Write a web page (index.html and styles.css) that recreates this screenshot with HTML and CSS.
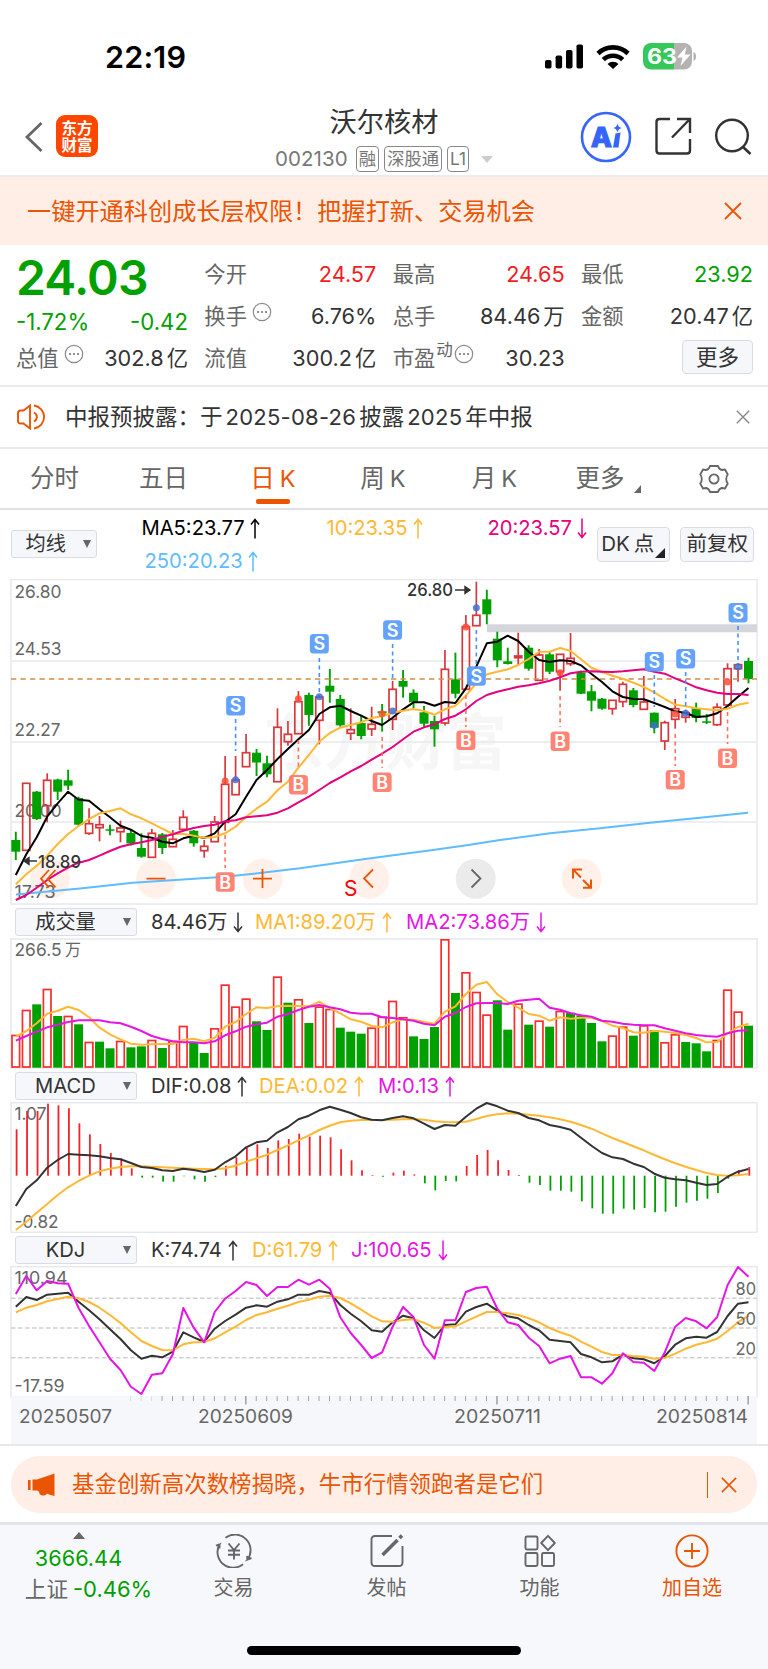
FILE: index.html
```html
<!DOCTYPE html>
<html lang="zh-CN">
<head>
<meta charset="utf-8">
<title>沃尔核材 002130</title>
<link rel="stylesheet" href="styles.css">
</head>
<body>
<svg class="defs" width="0" height="0">
  <symbol id="up" viewBox="0 0 10 21"><path d="M5 20.5V1.5M1 6.5l4-5 4 5" fill="none" stroke="currentColor" stroke-width="1.5"/></symbol>
  <symbol id="down" viewBox="0 0 10 21"><path d="M5 .5v19M1 14.5l4 5 4-5" fill="none" stroke="currentColor" stroke-width="1.5"/></symbol>
  <symbol id="dots" viewBox="0 0 20 20"><circle cx="10" cy="10" r="8.7" fill="none" stroke="#8a8a8a" stroke-width="1.2"/><g fill="#777"><circle cx="6" cy="10" r="1.1"/><circle cx="10" cy="10" r="1.1"/><circle cx="14" cy="10" r="1.1"/></g></symbol>
  <symbol id="cross" viewBox="0 0 18 18"><path d="M1 1l16 16M17 1L1 17" fill="none" stroke="currentColor" stroke-width="1.8"/></symbol>
</svg>

<header class="status">
  <span class="clock">22:19</span>
  <svg class="status-icons" width="154" height="30" viewBox="543 41 154 30">
    <g><rect x="545" y="60" width="6.5" height="8.5" rx="1.8"/><rect x="555.6" y="55.5" width="6.5" height="13" rx="1.8"/><rect x="566" y="50" width="6.5" height="18.5" rx="1.8"/><rect x="576.5" y="44.5" width="6.5" height="24" rx="1.8"/></g>
    <g fill="none" stroke="#000" stroke-width="4.6"><path d="M598 53.5a21.5 21.5 0 0 1 30 0"/><path d="M603.3 59.6a14 14 0 0 1 19.4 0"/></g>
    <path d="M607.5 64a8 8 0 0 1 11 0l-5.5 5z"/>
    <clipPath id="bat"><rect x="643" y="43" width="49" height="26.5" rx="8"/></clipPath>
    <g clip-path="url(#bat)"><rect x="643" y="43" width="31" height="27" fill="#34c759"/><rect x="674" y="43" width="19" height="27" fill="#b3b3b3"/></g>
    <path d="M693.5 52c3.5 1.5 3.5 7.5 0 9z" fill="#b3b3b3"/>
    <text x="647" y="64" class="bat-text" textLength="30" lengthAdjust="spacingAndGlyphs">63</text>
    <path d="M686.5 46.5L677 57.5h5.5l-2 8.5 10-11.5h-5.7z" fill="#fff"/>
  </svg>
</header>

<nav class="nav">
  <div class="nav-left">
    <svg width="20" height="32" viewBox="0 0 20 32"><path d="M17.5 2L3 16l14.5 14" fill="none" stroke="#666" stroke-width="2.8"/></svg>
    <div class="logo"><span>东方</span><span>财富</span></div>
  </div>
  <div class="nav-title">
    <h1>沃尔核材</h1>
    <div class="code"><span class="num">002130</span><i>融</i><i>深股通</i><i>L1</i><b></b></div>
  </div>
  <div class="nav-right">
    <svg width="52" height="52" viewBox="579 111 52 52"><circle cx="605" cy="137" r="24" fill="none" stroke="#3565fb" stroke-width="2.6"/><text x="590" y="147" class="ai">A</text><path d="M614.5 133.5l5-1-2 15h-5.5z" fill="#3565fb"/><path d="M616.5 123.5q.8 4 4.3 4.5-3.5.6-4.3 4.5-.8-3.9-4.2-4.5 3.400-.6 4.2-4.5z" fill="#3565fb"/></svg>
    <svg width="38" height="38" viewBox="653 117 38 38"><path d="M669 120h-10.500q-3 0-3 3v28.500q0 3 3 3H686q3 0 3-3V140M676 120h13v14M688.500 120.500L671 138.500" transform="translate(0 -1)" fill="none" stroke="#333" stroke-width="2.4"/></svg>
    <svg width="38" height="38" viewBox="713 117 38 38"><circle cx="731" cy="135.500" r="15.800" fill="none" stroke="#333" stroke-width="2.4"/><path d="M742 147l7.500 7" stroke="#333" stroke-width="2.6"/></svg>
  </div>
</nav>

<div class="banner"><span>一键开通科创成长层权限！把握打新、交易机会</span><svg width="18" height="18"><use href="#cross"/></svg></div>

<section class="quote">
  <div class="col">
    <strong class="price">24.03</strong>
    <div class="change"><span>-1.72%</span><span>-0.42</span></div>
    <div class="cell"><label>总值</label><svg class="tip" width="20" height="20"><use href="#dots"/></svg><span class="val">302.8<em>亿</em></span></div>
  </div>
  <div class="col">
    <div class="cell"><label>今开</label><span class="val up">24.57</span></div>
    <div class="cell"><label>换手</label><svg class="tip" width="20" height="20"><use href="#dots"/></svg><span class="val">6.76%</span></div>
    <div class="cell"><label>流值</label><span class="val">300.2<em>亿</em></span></div>
  </div>
  <div class="col">
    <div class="cell"><label>最高</label><span class="val up">24.65</span></div>
    <div class="cell"><label>总手</label><span class="val">84.46<em>万</em></span></div>
    <div class="cell"><label>市盈</label><small>动</small><svg class="tip near" width="20" height="20"><use href="#dots"/></svg><span class="val">30.23</span></div>
  </div>
  <div class="col">
    <div class="cell"><label>最低</label><span class="val down">23.92</span></div>
    <div class="cell"><label>金额</label><span class="val">20.47<em>亿</em></span></div>
    <div class="cell"><button class="more">更多</button></div>
  </div>
</section>

<div class="notice">
  <svg width="30" height="26" viewBox="0 0 30 26" fill="none" stroke="#ea5504" stroke-width="1.9"><path d="M13 1.500L6.500 6.500H3.500Q1 6.500 1 9v8q0 2.500 2.500 2.500h3L13 24.500z"/><path d="M17 8.500a5 5 0 0 1 0 9M17 1.500a11.600 11.600 0 0 1 0 23"/></svg>
  <span class="notice-text">中报预披露：于<u>2025-08-26</u>披露<u>2025</u>年中报</span>
  <svg class="notice-x" width="14" height="14"><use href="#cross"/></svg>
</div>

<div class="tabs">
  <a>分时</a><a>五日</a><a class="on">日<u>K</u></a><a>周<u>K</u></a><a>月<u>K</u></a><a class="drop">更多<b></b></a>
  <svg width="30" height="30" viewBox="-15 -15 30 30" fill="none" stroke="#666" stroke-width="1.8"><path d="M-4-13h8q1 3.500 4 4l3-.5 2.800 5q-1.600 2-1.600 4.500t1.600 4.500l-2.800 5-3-.5q-3 .5-4 4h-8q-1-3.500-4-4l-3 .5-2.800-5q1.600-2 1.600-4.500t-1.600-4.500l2.800-5 3 .5q3-.5 4-4z" stroke-linejoin="round"/><circle r="4.600"/></svg>
</div>

<div class="indicator">
  <div class="select small"><span>均线</span><b></b></div>
  <div class="ma">
    <span class="black">MA5:23.77<svg width="10" height="21"><use href="#up"/></svg></span>
    <span class="gold">10:23.35<svg width="10" height="21"><use href="#up"/></svg></span>
    <span class="pink">20:23.57<svg width="10" height="21"><use href="#down"/></svg></span>
    <span class="sky">250:20.23<svg width="10" height="21"><use href="#up"/></svg></span>
  </div>
  <div class="chip dk">DK<em>点</em><b></b></div>
  <div class="chip">前复权</div>
</div>

<svg class="chart" id="price" width="768" height="326" viewBox="0 579 768 326"></svg>

<div class="sub">
  <div class="select"><span>成交量</span><b></b></div>
  <span class="dark w1">84.46万<svg width="10" height="21"><use href="#down"/></svg></span>
  <span class="gold w2">MA1:89.20万<svg width="10" height="21"><use href="#up"/></svg></span>
  <span class="violet">MA2:73.86万<svg width="10" height="21"><use href="#down"/></svg></span>
</div>
<svg class="chart" id="volume" width="768" height="131" viewBox="0 938 768 131"></svg>

<div class="sub">
  <div class="select"><span>MACD</span><b></b></div>
  <span class="dark w3">DIF:0.08<svg width="10" height="21"><use href="#up"/></svg></span>
  <span class="gold w4">DEA:0.02<svg width="10" height="21"><use href="#up"/></svg></span>
  <span class="violet">M:0.13<svg width="10" height="21"><use href="#up"/></svg></span>
</div>
<svg class="chart" id="macd" width="768" height="131" viewBox="0 1102 768 131"></svg>

<div class="sub">
  <div class="select"><span>KDJ</span><b></b></div>
  <span class="dark w5">K:74.74<svg width="10" height="21"><use href="#up"/></svg></span>
  <span class="gold w6">D:61.79<svg width="10" height="21"><use href="#up"/></svg></span>
  <span class="violet">J:100.65<svg width="10" height="21"><use href="#down"/></svg></span>
</div>
<svg class="chart" id="kdj" width="768" height="178" viewBox="0 1266 768 178"></svg>

<div class="promo-wrap">
  <div class="promo">
    <svg width="28" height="24" viewBox="0 0 28 24" fill="#ea5504"><rect x="0" y="7" width="2.600" height="10"/><path d="M4.500 6.500H9L26.500.500V23L21 21.500 19 20.500q-1 2.500-4.500 2t-3.500-4L9 17.500H4.500z"/></svg>
    <span>基金创新高次数榜揭晓，牛市行情领跑者是它们</span>
    <hr>
    <svg width="16" height="16"><use href="#cross"/></svg>
  </div>
</div>

<footer class="tabbar">
  <div class="index"><b></b><span class="num">3666.44</span><span>上证<u>-0.46%</u></span></div>
  <div class="item"><svg width="38" height="34" viewBox="-19 -17 38 34" fill="none" stroke="#666" stroke-width="1.9"><path d="M-8.500-13.200A15.600 15.600 0 0 1 13.500 8.500l4-1.500M13.500 8.500L13 5M9 13.200A15.600 15.600 0 0 1-14.500-6.500l-3.500 1.200M-14.500-6.500v4"/><path d="M-5.500-7.500L0-1l5.500-6.500M-6-.500H6M-6 3.800H6M0-1V8.500"/></svg><span>交易</span></div>
  <div class="item"><svg width="34" height="34" viewBox="0 0 34 34" fill="none" stroke="#666" stroke-width="1.9"><path d="M22 2H5Q1.500 2 1.500 5.500v23Q1.500 32 5 32h24q3.500 0 3.500-3.500V12"/><path d="M12.500 21L27.500 6" stroke-width="3.6"/><path d="M29.500 4l2.500-2.500" stroke-width="3.6"/></svg><span>发帖</span></div>
  <div class="item"><svg width="34" height="34" viewBox="0 0 34 34" fill="none" stroke="#666" stroke-width="1.9"><rect x="2.500" y="2.500" width="12" height="13" rx="1.500"/><rect x="2.500" y="19" width="12" height="13" rx="1.500"/><rect x="19" y="19" width="12" height="13" rx="1.500"/><path d="M25 1.800l6.800 7.200L25 16.200 18.200 9z" stroke-linejoin="round"/></svg><span>功能</span></div>
  <div class="item add"><svg width="34" height="34" viewBox="0 0 34 34" fill="none" stroke="#ea5504" stroke-width="1.9"><circle cx="17" cy="17" r="15.600"/><path d="M17 9v16M9 17h16"/></svg><span>加自选</span></div>
  <div class="home"></div>
</footer>
<script src="chart.js"></script>
</body>
</html>
```

FILE: styles.css
```css
* { box-sizing: border-box; }
body { margin: 0; width: 768px; background: #fff; color: #333; font-family: Inter, "Noto Sans CJK SC", sans-serif; font-size: 21px; line-height: 1; }
u, i, em { text-decoration: none; font-style: normal; }
svg { display: block; flex: none; }
.defs { height: 0; }

.status { height: 100px; padding: 41px 71px 0 105px; display: flex; justify-content: space-between; align-items: flex-start; }
.clock { color: #000; font-size: 30.5px; font-weight: 600; line-height: 32px; letter-spacing: .2px; }
.bat-text { font: 700 21px Inter, sans-serif; fill: #fff; }

.nav { height: 77px; padding: 0 16px 0 24px; display: grid; grid-template-columns: 175px 1fr 183px; border-bottom: 2px solid #ececf0; }
.nav-left { display: flex; align-items: flex-start; padding-top: 15px; gap: 12px; }
.nav-left svg { margin-top: 6px; }
.logo { width: 42px; height: 42px; border-radius: 9px; background: #ff4600; color: #fff; display: flex; flex-direction: column; align-items: center; justify-content: center; font: 700 15.5px/17.5px "Noto Sans CJK SC", sans-serif; }
.nav-title { display: flex; flex-direction: column; align-items: center; }
.nav-title h1 { margin: 6px 0 0; font-size: 27.2px; line-height: 34px; font-weight: 400; color: #333; }
.code { display: flex; align-items: center; height: 28px; margin-top: 5px; gap: 5px; color: #777; }
.code .num { font-size: 20.5px; margin-right: 3px; letter-spacing: .1px; }
.code i { border: 1.5px solid #888; border-radius: 4px; height: 26px; line-height: 23px; padding: 0 2px; font-size: 17.3px; }
.code b { border: 6px solid transparent; border-top: 7px solid #ccc; border-bottom: 0; margin-left: 7px; }
.nav-right { display: flex; justify-content: flex-end; gap: 22px; padding-top: 11px; }
.nav-right svg + svg { margin-top: 6px; }
.ai { font: 800 27px Inter, sans-serif; fill: #3565fb; stroke: #3565fb; stroke-width: 1.2px; }

.banner { height: 68px; background: #feeee6; color: #ea5504; display: flex; justify-content: space-between; align-items: center; padding: 3px 26px 0 27px; font-size: 24.2px; }
.banner svg { margin-top: -4px; }

.quote { height: 142px; padding: 9px 15px 0 16px; display: grid; grid-template-columns: 172px 172px 172px 172px; justify-content: space-between; border-bottom: 2px solid #ebebef; }
.cell { height: 42px; display: flex; align-items: center; }
.cell label { color: #666; font-size: 21.3px; }
.cell small { color: #666; font-size: 16.5px; margin: -18px 0 0 1px; }
.tip { margin: -11px 0 0 5px; }
.tip.near { margin-left: 1px; }
.val { margin-left: auto; font-size: 21.7px; }
.val em { margin-left: 3px; font-size: 21.3px; }
.up { color: #f21c23; }
.down, .change, .price { color: #00a000; }
.price { display: block; height: 47px; font-size: 48px; line-height: 47px; font-weight: 600; letter-spacing: -.8px; }
.change { height: 37px; display: flex; justify-content: space-between; align-items: center; padding-top: 6px; font-size: 22.2px; }
.more { margin: -5px 0 0 auto; width: 71px; height: 34px; padding: 0; border: 1.5px solid #d9dce6; border-radius: 4px; background: #f6f7fb; font: inherit; font-size: 21.5px; line-height: 30px; color: #333; }

.notice { height: 62px; display: flex; align-items: center; padding: 0 18px 0 17px; border-bottom: 2px solid #e9e9ed; color: #333; }
.notice-text { margin-left: 18px; font-size: 22.5px; }
.notice-text u { margin: 0 3px; font-size: 22px; letter-spacing: .25px; }
.notice-x { margin-left: auto; color: #888; }

.tabs { height: 61px; display: grid; grid-template-columns: 109px 109px 110px 110px 113px 114px 1fr; align-items: center; justify-items: center; color: #666; font-size: 24.5px; border-bottom: 2px solid #e0e1e6; }
.tabs a { height: 59px; line-height: 59px; display: flex; align-items: center; position: relative; }
.tabs u { margin-left: 5px; font-size: 23.5px; }
.tabs .on { color: #ea5504; }
.tabs .on::after { content: ""; position: absolute; left: 50%; margin-left: -17px; bottom: 4px; width: 34px; height: 5px; border-radius: 2px; background: #ea5504; }
.tabs .drop b { width: 0; border-left: 7px solid transparent; border-bottom: 8px solid #666; margin: 20px 0 0 9px; }
.tabs > svg { margin-right: 6px; }

.indicator { height: 69px; display: flex; padding: 0 14px 0 11px; color: #333; }
.select { width: 122px; height: 28px; margin-left: 4px; border: 1.5px solid #d9dce6; border-radius: 3px; background: #f6f7fb; display: flex; align-items: center; font-size: 20.2px; }
.select span { flex: 1; text-align: center; padding-left: 2px; }
.select b, .small b { border: 4.5px solid transparent; border-top: 8px solid #666; border-bottom: 0; margin: 0 5px 0 10px; }
.select.small { width: 87px; margin: 20px 0 0; }
.select.small span { padding-left: 2px; }
.select.small b { margin-left: 6px; }
.ma { width: 490px; padding: 7px 0 0 44px; display: grid; grid-template-columns: 185px 161px 1fr; grid-template-rows: 22px 22px; row-gap: 11px; font-size: 20.2px; }
.ma span, .sub > span { display: flex; align-items: center; white-space: nowrap; }
.ma svg { margin-left: 5px; }
.sub > span svg { margin-left: 6px; }
.ma .sky { padding-left: 3px; }
.black { color: #000; } .gold { color: #ffb833; } .pink { color: #e4007f; } .sky { color: #5ebcff; } .dark { color: #333; } .violet { color: #e515e5; }
.chip { position: relative; height: 35px; width: 74px; margin: 17px 0 0 10px; border: 1.5px solid #d9dce6; border-radius: 4px; background: #f6f7fb; font-size: 20.5px; line-height: 32px; text-align: center; white-space: nowrap; }
.chip.dk { padding-right: 12px; }
.chip em { margin-left: 4px; }
.chip b { position: absolute; right: 4px; bottom: 3px; border-left: 10px solid transparent; border-bottom: 10px solid #222; }

.sub { height: 33px; display: flex; align-items: flex-start; padding: 3px 11px 0; font-size: 20.2px; }
.sub > span { height: 28px; }
.w1 { margin-left: 14px; width: 104px; } .w2 { width: 151px; }
.w3 { margin-left: 14px; width: 108px; } .w4 { width: 119px; }
.w5 { margin-left: 14px; width: 101px; } .w6 { width: 99px; }

.chart text { font-family: Inter, "Noto Sans CJK SC", sans-serif; }
.axis { font-size: 17.5px; fill: #666; }
.tag { font-size: 17.5px; fill: #333; font-weight: 500; }
.badge { font-size: 18px; fill: #fff; font-weight: 600; text-anchor: middle; }
.red-s { font-size: 21px; fill: #f00; }
.mark { font-size: 61px; font-weight: 700; fill: #f6f6f7; }
.date { font-size: 19px; fill: #666; }

.promo-wrap { border-top: 2px solid #e6e7eb; height: 78px; padding: 10px 11px 0; }
.promo { height: 57px; border-radius: 29px; background: #feeee6; color: #ea5504; display: flex; align-items: center; padding: 0 20px 0 17px; }
.promo span { margin-left: 16px; font-size: 22.45px; white-space: nowrap; }
.promo hr { margin: 0 13px 0 auto; width: 1.5px; height: 26px; border: 0; background: #ea5504; }

.tabbar { position: relative; height: 147px; background: #f7f8fb; border-top: 3px solid #e2e4e9; display: grid; grid-template-columns: 157px 153px 153px 153px 152px; align-items: start; }
.index { display: flex; flex-direction: column; align-items: center; padding-top: 7px; color: #666; font-size: 21.6px; white-space: nowrap; }
.index b { border: 6.5px solid transparent; border-bottom: 7px solid #666; border-top: 0; }
.index .num { margin: 9px 0 9px; font-size: 21.7px; line-height: 21px; color: #00a000; }
.index u { color: #00a000; margin-left: 5px; font-size: 22px; }
.index > span:last-child { margin-left: 20px; }
.item { display: flex; flex-direction: column; align-items: center; padding-top: 9px; color: #666; font-size: 20px; gap: 10px; }
.add { color: #ea5504; }
.home { position: absolute; left: 247px; top: 121px; width: 274px; height: 9px; border-radius: 5px; background: #000; }
```

FILE: chart.js
```js
const X0 = 15.8, STEP = 10.467, LEFT = 11, RIGHT = 757;
const RED = '#d8383c', GREEN = '#00a000';
const x = i => X0 + STEP * i;
const put = (id, parts) => { document.getElementById(id).innerHTML = parts.join(''); };
const line = (x1, y1, x2, y2, c, w = 1.5, extra = '') => `<line x1="${x1}" y1="${y1}" x2="${x2}" y2="${y2}" stroke="${c}" stroke-width="${w}" ${extra}/>`;
const box = (bx, y, w, h, c, extra = '') => `<rect x="${bx}" y="${y}" width="${w}" height="${h}" fill="${c}" ${extra}/>`;
const text = (tx, ty, cls, s, len) => `<text x="${tx}" y="${ty}" class="${cls}" ${len ? `textLength="${len}" lengthAdjust="spacingAndGlyphs"` : ''}>${s}</text>`;
const curve = (ys, c, f = v => v, w = 2) => `<polyline fill="none" stroke="${c}" stroke-width="${w}" stroke-linejoin="round" points="${ys.map((v, i) => x(i).toFixed(1) + ',' + f(v).toFixed(1)).join(' ')}"/>`;
const frame = (t, b) => `<rect x="${LEFT}" y="${t}" width="${RIGHT - LEFT}" height="${b - t}" fill="none" stroke="#e6e8ed" stroke-width="1.5"/>`;

// direction, high, body top, body bottom, low
const candles = [
 [0,831.7,840,851.7,860],[1,783.3,783.3,850.3,850.3],[0,791,791.7,819,820],[1,773.3,780.3,805.7,822.3],[0,778.7,779.5,791.7,800],
 [0,769.7,780.3,785.7,790],[0,796.7,798,824.7,826],[1,808.3,823.7,833.3,835],[1,816,824.7,827.7,841.3],[0,824.7,829.3,830.7,835.3],
 [1,820.7,828,831.7,842.3],[0,829,833,843.5,845.5],[0,833.3,848,856.7,857.7],[1,829,833.3,857.3,858],[0,833,834.3,848,854],
 [1,830,839.3,846.7,847],[1,810.3,817.3,829.3,830],[0,830,830.7,843.3,846.7],[1,840,846.3,850.7,857.7],[1,816,822,841.7,842],
 [1,756,784.3,822.3,830.7],[1,756,780,794.7,795],[1,734,752.7,766.7,767],[0,749,752.7,762.5,776],[0,755.7,763.3,774.3,777.3],
 [1,708.3,727.3,781.7,782],[1,721,734.3,741.7,745.7],[1,691,701.7,733.7,734],[0,692.7,695,715,725.7],[1,695,697,720.3,744.3],
 [0,669,685.7,691.7,702.7],[0,695,699,725.3,726.7],[1,708.3,729.7,733.3,740],[0,716,723,736,739.3],[1,706.7,724.3,729,736],
 [0,704,711.3,713.3,731.7],[1,681,689.3,719.3,730],[0,670,681,686.7,697.7],[0,689.3,692.7,702.3,708.3],[0,706,712.3,723.7,726.7],
 [0,715.7,721,729.3,746.7],[1,650,669.3,723,725.5],[0,652.7,679.3,693.7,698.3],[1,615,626.7,689.3,690],[1,581.7,615.3,625.7,626],
 [0,589.7,599.3,614.3,624.3],[0,631.7,638.7,660.3,667.3],[0,647.7,661.3,664,664.5],[1,632.7,656,657.7,665.7],[0,645.3,647.7,668.7,670.7],
 [1,649,655,680.3,681],[0,651.7,654.3,671.7,674],[1,654,654.3,671.7,690.7],[1,633,658.3,663.7,666],[0,670.7,672.7,693.7,694],
 [0,685,691.3,700.7,711.3],[0,698,698.7,708.7,709.7],[1,700.3,700.3,708.7,714.7],[1,681.7,684.3,701.7,707.3],[0,688,690.3,705,707.3],
 [1,676,702,709.3,710],[0,712.5,712.7,727.7,733.3],[1,720.7,722.7,741,750],[1,699,708.7,719.3,728.7],[1,710,712.7,717.3,722.7],
 [0,702.7,708.3,718,722.3],[0,714,721.3,722.7,724],[1,703.3,707.3,724.7,725.7],[1,663.3,668.7,705,706.7],[1,663.3,664.7,668.7,681.7],
 [0,657.7,661,679,683.3]];
const ma5 = [875,854.3,837.3,816.7,803.3,791.7,799.7,800.7,809.3,817.3,825.7,829.7,836,837.7,841.7,843.3,838.3,835.7,838,833.3,821.7,814.3,796.7,780,770,759,749,739.3,730,714,707.3,705.7,711,715.7,721,725,717.7,709.3,702.3,702.3,705.7,702,703,688.3,666.7,643.3,641.7,635.7,641,651.7,660,662,660.3,661,665.3,674,682,691.3,697,699,699.3,703,707,711.3,713,717,716.3,713.3,706,696.7,688];
const ma10 = [884.3,874.3,865.7,855.7,844,834,826,819,813.3,811,808.3,814.3,818.3,823.3,828.7,834,834,835.7,837.7,837,833.3,826.7,816.7,808.7,801.7,790.3,781.7,767.7,755,741.7,733,727.7,725,722.3,718,716.3,712.7,710.7,709,711,714.7,709.3,705.7,695.7,683.3,674.3,671.7,669.3,665,659,651.7,651.7,648,651,659.3,667.7,672,675.7,678.7,682.7,687,692.3,699,704.7,706.3,708.3,709.3,710.3,708.7,704.7,702.7];
const ma20 = [900,895,887.7,880,873.3,867.7,862.7,860,855.7,851,846.7,844.3,842.3,840,837,834.3,830.7,828,826,824.7,821.3,820.3,817.3,816.3,815.3,812.7,808.3,802.3,796.7,790,783,777.3,771.3,766,759.7,753.7,747,739.3,731.7,727.3,724.3,719,715.7,709.3,701,695,691.7,689.3,686.7,685.3,683.3,680.7,677.3,673.3,671.7,671.3,671.7,672,671.3,670.3,669.3,671.7,673.7,678.3,682.7,687.3,690.3,692.7,694,694,695];
const sells = [[21,705.7,719,751,779.7],[29,643.7,658,695,696.7],[36,630,644,679,711],[44,676,630,664,607.7],[61,661.7,675,707,725.3],[64,658.7,672,711,713.3],[69,612.7,626,662,666.7]];
const buys = [[20,882,835,868,781],[27,784.7,740,770,698.7],[35,782.3,737,768,713.7],[43,740.3,695,727,627],[52,741.3,696,727,672.7],[63,779.7,734,766,714],[68,758.3,712,744,682]];

const p = [];
p.push(text(263, 765, 'mark', '东方财富', 244));
p.push(frame(579.5, 904), line(LEFT, 661, RIGHT, 661, '#e6e8ed'), line(LEFT, 742, RIGHT, 742, '#e6e8ed'), line(LEFT, 822, RIGHT, 822, '#e6e8ed'));
[50, 156, 262.7, 369.3, 475.7, 581.7].forEach((cx, i) => p.push(`<circle cx="${cx}" cy="878.7" r="20" fill="${i === 4 ? '#ebebeb' : '#fff1ea'}"/>`));
['26.80', '24.53', '22.27', '20.00', '17.73'].forEach((s, i) => p.push(text(14.5, [598, 655, 736, 817, 898][i], 'axis', s, [47, 47, 46, 47, 41][i])));
p.push(box(487, 624.3, 270, 8, '#d4d6dc'));
candles.forEach(([up, h, t, b, l], i) => {
  const c = up ? RED : GREEN, cx = x(i);
  if (up) {
    p.push(line(cx, h, cx, t, c, 1.7), line(cx, b, cx, l, c, 1.7));
    p.push(`<rect x="${cx - 3.6}" y="${t}" width="7.2" height="${b - t}" fill="none" stroke="${c}" stroke-width="1.7"/>`);
  } else p.push(line(cx, h, cx, l, c, 1.9), box(cx - 4.5, t, 9, Math.max(b - t, 1.5), c));
});
p.push(line(LEFT, 679, RIGHT, 679, '#d28c46', 1.5, 'stroke-dasharray="5.3 4.2"'));
p.push(`<polyline fill="none" stroke="#5ebcff" stroke-width="2" points="16,894.5 80,888.5 133,882.7 225,876.7 260,873 300,868.3 367,858.7 433,850 470,844.7 500,840 550,833.3 600,828.3 650,822.7 700,817.7 748,812.7"/>`);
p.push(curve(ma5, '#000'), curve(ma10, '#ffb833'), curve(ma20, '#e4007f'));
[[sells, '#4a90f8', '#5c9efc', '#3d70d8', 'S'], [buys, '#ff7262', '#ff7d6d', '#ff4b35', 'B']].forEach(([rows, stroke, fill, dot, s]) => rows.forEach(([i, y, a, b, d]) => {
  p.push(line(x(i), a, x(i), b, stroke, 1.6, 'stroke-dasharray="4 3.5"'), `<circle cx="${x(i)}" cy="${d}" r="3.5" fill="${dot}" opacity=".85"/>`);
  p.push(box(x(i) - 9.5, y - 9.7, 19, 19.4, fill, 'rx="3.5" fill-opacity=".95"'), text(x(i), y + 6.5, 'badge', s));
}));
p.push('<g fill="none" stroke="#ea5504" stroke-width="1.8"><path d="M49 870l-8 8.700 8 8.700M55.500 870l-8 8.700 8 8.700M146.500 878.700h19M253 878.700h19M262.500 869v19M373 869.500l-9 9 9 9"/><path d="M573 878.500V869.500h9M573.500 870l7.500 7.500M583 880l7.500 7.500M591 879.500V887.700h-8" stroke-width="2"/></g><path d="M471.500 869.500l9 9-9 9" fill="none" stroke="#666" stroke-width="1.8"/>');
p.push(text(407, 596, 'tag', '26.80', 46), '<path d="M455 590h13M465 586.5l5 3.5-5 3.5z" fill="#333" stroke="#333" stroke-width="1.4"/>');
p.push('<path d="M37 861H26M29 857.5L24 861l5 3.5z" fill="#333" stroke="#333" stroke-width="1.4"/>', text(38, 867.5, 'tag', '18.89', 43), text(344, 896, 'red-s', 'S'));
put('price', p);

const vol = [405,330,-313,267,-348,348,-373,426,-425,-445,423,-442,-439,420,-444,423,378,-427,-459,385,254,320,296,-364,-390,230,-308,298,-369,320,327,-383,-395,-401,383,350,303,352,-409,-417,-381,118,-279,217,276,344,-301,-389,311,-374,362,-380,333,-338,-346,-369,-424,407,380,-407,376,-390,427,403,-426,-430,-454,420,269,335,-377];
const vma1 = [410,393,370,341,332,320,330,352,383,403,418,431,434,433,432,432,420,416,424,413,380,366,342,322,324,319,317,318,319,305,324,340,358,365,378,382,367,358,359,366,371,335,319,282,254,246,283,306,323,342,347,362,352,356,353,353,363,377,384,397,398,392,395,399,405,414,427,426,400,381,371];
const vma2 = [422,408,395,382,374,366,361,361,361,367,370,380,393,408,417,424,427,427,430,424,406,394,380,373,368,350,342,330,320,315,322,328,338,341,341,352,354,358,362,371,376,350,339,321,310,309,309,312,302,299,296,323,329,340,346,350,362,365,371,374,376,376,385,392,400,405,408,410,400,392,391];
const vy = v => 900 + v / 3;
const v = [frame(939, 1068), text(14.5, 956, 'axis', '266.5', 47), text(65, 956, 'axis', '万', 16)];
vol.forEach((n, i) => {
  const t = vy(Math.abs(n));
  v.push(n < 0 ? box(x(i) - 4.5, t, 9, 1067.7 - t, GREEN) : `<rect x="${x(i) - 3.8}" y="${t + .5}" width="7.6" height="${1066.5 - t}" fill="#fff" stroke="#fa2c2c" stroke-width="1.7"/>`);
});
v.push(curve(vma1, '#ffb833', vy), curve(vma2, '#e515e5', vy));
put('volume', v);

const bars = [178,123,123,101,106,115,160,193,222,249,265,295,323,323,335,335,319,328,335,321,287,262,234,223,234,211,207,191,200,197,202,238,271,301,315,320,308,302,313,340,361,333,334,288,255,240,271,300,315,338,345,362,362,365,394,415,431,431,416,419,414,427,425,410,398,392,386,369,326,300,291];
const dif = [408,357,331,293,270,252,254,256,259,264,268,279,291,294,301,303,296,300,306,299,277,259,232,217,212,187,171,148,137,121,110,119,129,142,149,151,144,139,145,161,177,165,167,140,116,99,109,122,129,144,151,165,171,179,203,227,249,262,267,281,291,311,323,328,331,338,345,342,320,305,297];
const dea = [480,455,428,402,375,352,333,317,304,296,291,289,289,290,292,293,295,296,297,298,295,287,275,265,254,240,226,211,196,180,167,157,152,150,150,150,149,148,147,149,154,156,157,155,147,138,133,130,131,134,137,142,148,155,165,176,190,204,216,229,241,255,268,280,290,300,309,315,317,316,312];
const my = n => 1070 + n / 3;
const m = [frame(1102.7, 1232.3), text(14.5, 1120, 'axis', '1.07', 32), text(14.5, 1228, 'axis', '-0.82', 44)];
bars.forEach((n, i) => m.push(line(x(i) + .8, my(317), x(i) + .8, my(n), n < 317 ? '#f5222a' : GREEN, 1.8)));
m.push(curve(dea, '#ffb833', my), curve(dif, '#333', my));
put('macd', m);

const kk = [230,201,210,194,191,188,215,241,268,298,327,361,386,377,382,365,307,322,336,296,273,254,233,226,230,215,208,194,194,183,189,225,251,274,301,305,277,257,265,301,324,285,283,245,231,221,242,259,265,285,301,329,333,337,372,382,397,394,374,385,388,400,378,344,325,320,323,306,258,221,217];
const dd = [247,233,225,214,207,200,205,216,233,255,279,307,333,348,360,361,343,337,336,325,307,290,270,255,247,236,227,216,209,200,197,204,220,239,259,274,275,270,268,278,294,291,289,274,260,246,246,250,255,265,277,294,307,317,335,350,366,375,375,378,380,386,384,371,356,344,337,326,303,277,257];
const jj = [192,138,181,153,160,161,234,288,337,386,420,470,492,434,430,373,234,293,337,246,206,183,156,165,198,171,171,149,164,149,176,262,309,345,384,367,290,231,261,345,386,271,271,186,174,170,236,277,285,323,348,400,386,378,442,442,461,430,370,396,398,423,367,290,264,274,295,262,165,111,140];
const ky = n => 1230 + n / 3;
const k = [frame(1266.7, 1397), box(LEFT, 1395.7, RIGHT - LEFT, 49, '#f6f7fb')];
[1298.3, 1328, 1357.7].forEach(y => k.push(line(LEFT, y, RIGHT, y, '#cfcfcf', 1.6, 'stroke-dasharray="4.5 2.5"')));
k.push(text(14.5, 1284, 'axis', '110.94', 53), text(14.5, 1392, 'axis', '-17.59', 50));
k.push(curve(kk, '#333', ky), curve(dd, '#ffb833', ky), curve(jj, '#e515e5', ky));
[['80', 1295], ['50', 1325], ['20', 1354.5]].forEach(([s, y]) => k.push(text(735.5, y, 'axis', s, 20.5)));
for (let i = 11; i <= 70; i++) k.push(line(x(i) - .3, 1396, x(i) - .3, (i - 22) % 24 ? 1401 : 1404.5, i < 14 ? '#dcdde0' : '#a4a5a8', (i - 22) % 24 ? 1 : 1.6));
[['20250507', 19, 93], ['20250609', 198, 95], ['20250711', 454, 87], ['20250814', 656, 92]].forEach(([s, tx, w]) => k.push(text(tx, 1423, 'date', s, w)));
put('kdj', k);
```
